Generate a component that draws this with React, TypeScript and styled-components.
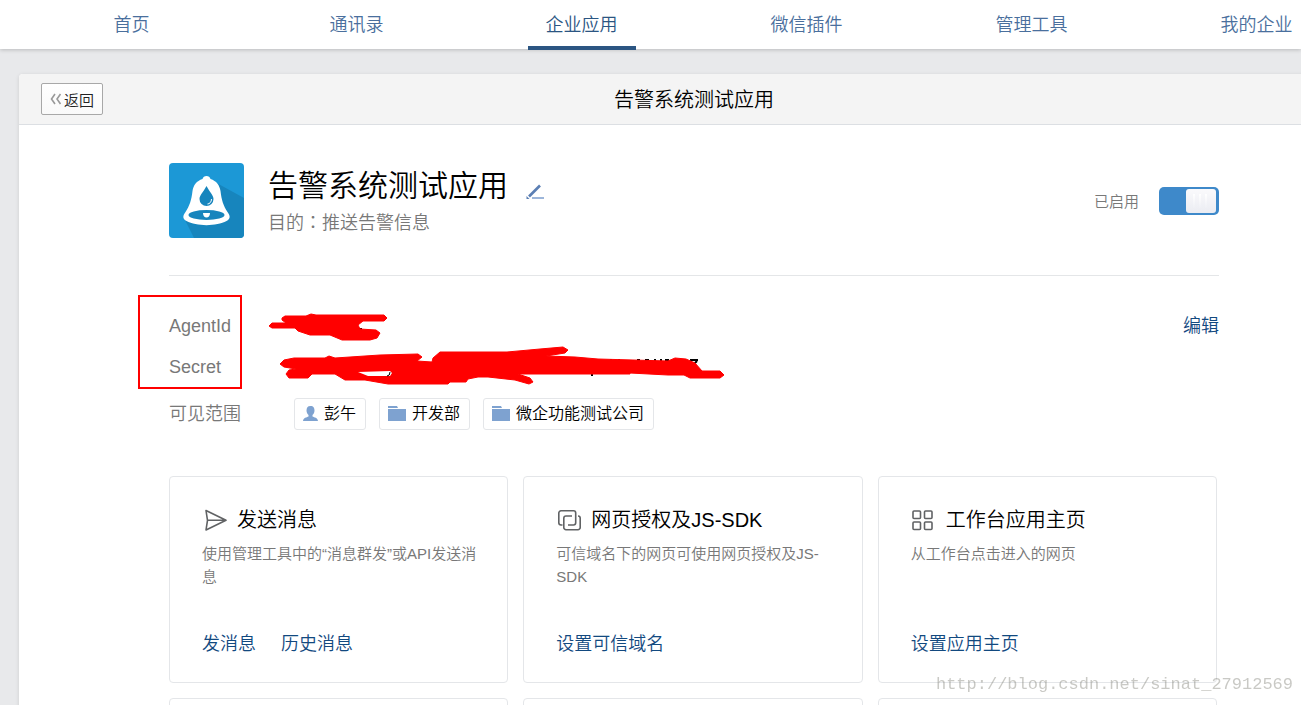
import React from "react";
import styled, { createGlobalStyle } from "styled-components";

const Global = createGlobalStyle`
  * { box-sizing: border-box; }
  body {
    margin: 0;
    background: #e8e9eb;
    color: #000;
    font-family: "Liberation Sans", "Noto Sans CJK SC", sans-serif;
    font-weight: 350;
  }
  h1, h2, p, ul { margin: 0; padding: 0; font-weight: 350; }
  a { text-decoration: none; }
`;

const Page = styled.div`
  height: 100vh;
  overflow: hidden;
`;

const NavBar = styled.nav`
  height: 49px;
  background: #fff;
  box-shadow: 0 1px 4px rgba(0, 0, 0, 0.2);
`;

const NavList = styled.ul`
  display: grid;
  grid-template-columns: repeat(6, 1fr);
  justify-items: center;
  list-style: none;
  margin: 0 -68px 0 19px;
`;

const NavLink = styled.a<{ $active?: boolean }>`
  display: block;
  height: 50px;
  padding: 0 18px;
  line-height: 50px;
  font-size: 18px;
  color: ${(p) => (p.$active ? "#2b5582" : "#4a6f9d")};
  box-shadow: ${(p) => (p.$active ? "inset 0 -4px #2b5582" : "none")};
`;

const Panel = styled.main`
  margin: 25px -68px 0 19px;
  background: #fff;
  border-radius: 4px 4px 0 0;
  box-shadow: 0 1px 4px rgba(0, 0, 0, 0.12);
`;

const PanelHeader = styled.header`
  display: grid;
  grid-template-columns: 1fr auto 1fr;
  align-items: center;
  height: 51px;
  padding: 0 22px;
  background: #f4f4f4;
  border-bottom: 1px solid #dcdfe3;
  border-radius: 4px 4px 0 0;
`;

const BackButton = styled.button`
  display: flex;
  align-items: center;
  justify-self: start;
  gap: 2px;
  height: 32px;
  padding: 0 8px;
  border: 1px solid #a8a8a8;
  border-radius: 2px;
  background: linear-gradient(#fff, #f9f9f9);
  color: #222;
  font: inherit;
  font-size: 15px;
`;

const PanelTitle = styled.h2`
  padding-top: 2px;
  font-size: 20px;
  line-height: 30px;
`;

const Content = styled.div`
  padding: 38px 150px 0;
`;

const AppHeader = styled.section`
  display: flex;
  align-items: center;
  padding-bottom: 37px;
  border-bottom: 1px solid #e4e6e8;
`;

const AppText = styled.div`
  flex: 1;
  margin-left: 24px;
`;

const NameLine = styled.div`
  display: flex;
  align-items: center;
  gap: 18px;
`;

const AppName = styled.h1`
  font-size: 30px;
  line-height: 44px;
`;

const IconButton = styled.button`
  display: flex;
  margin-top: 12px;
  padding: 0;
  border: 0;
  background: none;
`;

const Purpose = styled.p`
  font-size: 18px;
  line-height: 30px;
  color: #787878;
`;

const Colon = styled.span`
  font-family: "Noto Sans CJK TC", sans-serif;
  line-height: 1;
`;

const SwitchLabel = styled.label`
  display: flex;
  align-items: center;
  gap: 20px;
  font-size: 15px;
  color: #787878;
`;

const Switch = styled.input`
  appearance: none;
  display: flex;
  justify-content: flex-start;
  width: 60px;
  height: 28px;
  margin: 0;
  padding: 2px 3px;
  border-radius: 5px;
  background: #c8ccd0;

  &:checked {
    justify-content: flex-end;
    background: #3e89ca;
  }

  &::before {
    content: "";
    width: 30px;
    height: 24px;
    border-radius: 3px;
    background:
      linear-gradient(#fff, #eff0f5) 7px 5px / 2px 14px no-repeat,
      linear-gradient(#fff, #eff0f5) 13px 5px / 2px 14px no-repeat,
      linear-gradient(#fff, #eff0f5) 19px 5px / 2px 14px no-repeat,
      linear-gradient(#fafafc, #ebecf2);
  }
`;

const Info = styled.section`
  position: relative;
  padding-top: 29px;
`;

const InfoRow = styled.div<{ $tall?: boolean }>`
  display: flex;
  align-items: center;
  height: ${(p) => (p.$tall ? 54 : 41)}px;
  font-size: 18px;
`;

const InfoLabel = styled.span`
  width: 125px;
  line-height: 24px;
  color: #787878;
`;

const InfoValue = styled.div`
  display: flex;
  flex: 1;
  gap: 13px;
`;

const TextLink = styled.a`
  font-size: 18px;
  line-height: 24px;
  color: #12497f;
`;

const Tag = styled.span`
  display: flex;
  align-items: center;
  gap: 6px;
  height: 32px;
  padding: 0 9px 0 8px;
  border: 1px solid #e4e6e9;
  border-radius: 3px;
  font-size: 16px;
  line-height: 30px;
`;

const Annotation = styled.svg`
  position: absolute;
  top: 18px;
  left: -32px;
  pointer-events: none;
`;

const Cards = styled.section`
  display: grid;
  grid-template-columns: repeat(3, 1fr);
  gap: 15px;
  padding: 35px 2px 0 0;
`;

const Card = styled.article`
  display: flex;
  flex-direction: column;
  min-height: 207px;
  padding: 28px 24px 26px 32px;
  border: 1px solid #e4e6e9;
  border-radius: 4px;
`;

const CardTitle = styled.h2`
  display: flex;
  align-items: center;
  gap: 9px;
  font-size: 20px;
  line-height: 30px;
`;

const CardText = styled.p`
  margin-top: 7px;
  font-size: 15px;
  line-height: 23px;
  color: #787878;
`;

const CardLinks = styled.div`
  display: flex;
  gap: 25px;
  margin-top: auto;
`;

const Watermark = styled.div`
  position: fixed;
  right: 8px;
  bottom: 8px;
  font-family: "Liberation Mono", monospace;
  font-size: 17px;
  line-height: 24px;
  color: rgba(120, 120, 110, 0.4);
`;

const BellLogo = () => (
  <svg width="75" height="75" viewBox="0 0 75 75" aria-hidden="true">
    <rect width="75" height="75" rx="4" fill="#1c98d6" />
    <path d="M44 18 75 35V71a4 4 0 0 1-4 4H25L16 57Z" fill="#1785bd" />
    <path
      d="M37.500 13c2 0 3.500 1 4 3 6 2 9 6 10 12 1 9 3 15 7 21 3 4 3 7-1 9-10 5.500-30 5.500-40 0-4-2-4-5-1-9 4-6 6-12 7-21 1-6 4-10 10-12 .5-2 2-3 4-3Z"
      fill="#fff"
    />
    <path d="M37.500 23c3 6 7 9 7 13a7 7 0 0 1-14 0c0-4 4-7 7-13Z" fill="#1785bd" />
    <path d="M42.500 36c0 3-2 5-4 5" fill="none" stroke="#fff" />
    <ellipse cx="37.500" cy="52" rx="18" ry="5" fill="#1785bd" />
    <path d="M34 50h7c0 6-7 6-7 0Z" fill="#fff" />
  </svg>
);

const PencilIcon = () => (
  <svg width="18" height="16" viewBox="0 0 18 16" aria-hidden="true">
    <path d="M3 12.500 14 1.500" stroke="#5b7fb4" strokeWidth="2.600" />
    <path d="M.5 15v-3l3 3Z" fill="#5b7fb4" />
    <path d="M6 14h12" stroke="#9db6da" strokeWidth="2" />
  </svg>
);

const BackIcon = () => (
  <svg width="12" height="12" viewBox="0 0 12 12" fill="none" stroke="#999" strokeWidth="1.600" aria-hidden="true">
    <path d="M5 1 1.500 6 5 11M10.500 1 7 6l3.500 5" />
  </svg>
);

const PersonIcon = () => (
  <svg width="15" height="16" viewBox="0 0 15 16" fill="#7ea2d0" aria-hidden="true">
    <path d="M7.500 0c3 0 4 2 4 4.500 0 2-1 3.500-2 4.500v1.500c2 1 5 1 5.500 4.500H0c.5-3.500 3.500-3.500 5.500-4.500V9c-1-1-2-2.500-2-4.500C3.500 2 4.500 0 7.500 0Z" />
  </svg>
);

const FolderIcon = () => (
  <svg width="18" height="16" viewBox="0 0 18 16" fill="#7ea2d0" aria-hidden="true">
    <path d="M0 0h9l1 2H0Z" />
    <path d="M0 3h18v12H0Z" />
  </svg>
);

const iconProps = {
  width: 26,
  height: 26,
  viewBox: "0 0 26 26",
  fill: "none",
  stroke: "#606264",
  strokeWidth: 1.6,
  strokeLinejoin: "round" as const,
  "aria-hidden": true,
};

const SendIcon = () => (
  <svg {...iconProps}>
    <path d="M4 3.500 24 13.300 4 23l1.500-9.700ZM5.500 13.300H24" />
  </svg>
);

const LinkIcon = () => (
  <svg {...iconProps}>
    <path d="M6.500 18H5a2.200 2.200 0 0 1-2.200-2.200V6A2.200 2.200 0 0 1 5 3.800h12.500A2.200 2.200 0 0 1 19.700 6v9.800a2.200 2.200 0 0 1-2.200 2.200H12" />
    <path d="M22 9a2.200 2.200 0 0 1 2.200 2.200v9.300a2.200 2.200 0 0 1-2.200 2.200H10a2.200 2.200 0 0 1-2.200-2.200v-9.300A2.200 2.200 0 0 1 10 9h6" />
  </svg>
);

const GridIcon = () => (
  <svg {...iconProps}>
    <rect x="2" y="4" width="7.500" height="7.500" rx="1" />
    <rect x="13.500" y="4" width="7.500" height="7.500" rx="1" />
    <rect x="2" y="15" width="7.500" height="7.500" rx="1" />
    <rect x="13.500" y="15" width="7.500" height="7.500" rx="1" />
  </svg>
);

const navItems = ["首页", "通讯录", "企业应用", "微信插件", "管理工具", "我的企业"];

const cards = [
  {
    icon: <SendIcon />,
    title: "发送消息",
    text: "使用管理工具中的“消息群发”或API发送消息",
    links: ["发消息", "历史消息"],
  },
  {
    icon: <LinkIcon />,
    title: "网页授权及JS-SDK",
    text: "可信域名下的网页可使用网页授权及JS-SDK",
    links: ["设置可信域名"],
  },
  {
    icon: <GridIcon />,
    title: "工作台应用主页",
    text: "从工作台点击进入的网页",
    links: ["设置应用主页"],
  },
];

export default function App() {
  return (
    <Page>
      <Global />
      <NavBar>
        <NavList>
          {navItems.map((name) => (
            <li key={name}>
              <NavLink href="#" $active={name === "企业应用"}>
                {name}
              </NavLink>
            </li>
          ))}
        </NavList>
      </NavBar>
      <Panel>
        <PanelHeader>
          <BackButton type="button">
            <BackIcon />
            返回
          </BackButton>
          <PanelTitle>告警系统测试应用</PanelTitle>
        </PanelHeader>
        <Content>
          <AppHeader>
            <BellLogo />
            <AppText>
              <NameLine>
                <AppName>告警系统测试应用</AppName>
                <IconButton type="button" aria-label="编辑名称">
                  <PencilIcon />
                </IconButton>
              </NameLine>
              <Purpose>
                目的<Colon>：</Colon>推送告警信息
              </Purpose>
            </AppText>
            <SwitchLabel>
              已启用
              <Switch type="checkbox" role="switch" defaultChecked />
            </SwitchLabel>
          </AppHeader>
          <Info>
            <InfoRow>
              <InfoLabel>AgentId</InfoLabel>
              <InfoValue />
              <TextLink href="#">编辑</TextLink>
            </InfoRow>
            <InfoRow>
              <InfoLabel>Secret</InfoLabel>
            </InfoRow>
            <InfoRow $tall>
              <InfoLabel>可见范围</InfoLabel>
              <InfoValue>
                <Tag>
                  <PersonIcon />
                  彭午
                </Tag>
                <Tag>
                  <FolderIcon />
                  开发部
                </Tag>
                <Tag>
                  <FolderIcon />
                  微企功能测试公司
                </Tag>
              </InfoValue>
            </InfoRow>
            <Annotation width="590" height="98" viewBox="137 294 590 98" aria-hidden="true">
              <rect x="139" y="296" width="102" height="92" fill="none" stroke="red" strokeWidth="2" />
              <path
                d="M357 329h5M610 360h2M618 360h2M637 360h3M645 360h4M654 360h2M660 360h2M665 360h4M690 360h8M694 364l3-3M591 375h2"
                stroke="#000"
                strokeWidth="2"
              />
              <g fill="red" stroke="red" strokeLinejoin="round">
                <path d="M269 326 272 323H286L282 320V318L285 316H306L311 314 316 315H384L387 318 384 321H363L358 325 360 329 376 330 380 333 377 338 370 340H342L330 335H310L298 331 295 328H272Z" />
                <path d="M280 364 284 360 294 358H325L329 356 335 358 380 355 418 354 422 357 417 361 432 362 433 358 440 352H507L540 349 563 347 568 350 565 353 546 356 575 357 598 359 668 361 675 358 686 359 695 363 702 371H720L724 375 720 378H690L684 375H668L630 373V374H518L530 378 533 382 529 384 515 380 488 377H478L468 379 466 382H450L448 384H388L365 380H345L335 374H312L308 378H289L286 374 289 370 296 369 284 367Z" />
              </g>
              <path d="M358 372 368 376H390L392 373 390 371Z" fill="#fff" />
              <path d="M387 376q3 0 3-4" fill="none" stroke="#000" />
            </Annotation>
          </Info>
          <Cards>
            {cards.map((card) => (
              <Card key={card.title}>
                <CardTitle>
                  {card.icon}
                  {card.title}
                </CardTitle>
                <CardText>{card.text}</CardText>
                <CardLinks>
                  {card.links.map((link) => (
                    <TextLink key={link} href="#">
                      {link}
                    </TextLink>
                  ))}
                </CardLinks>
              </Card>
            ))}
            <Card />
            <Card />
            <Card />
          </Cards>
        </Content>
      </Panel>
      <Watermark>http://blog.csdn.net/sinat_27912569</Watermark>
    </Page>
  );
}
